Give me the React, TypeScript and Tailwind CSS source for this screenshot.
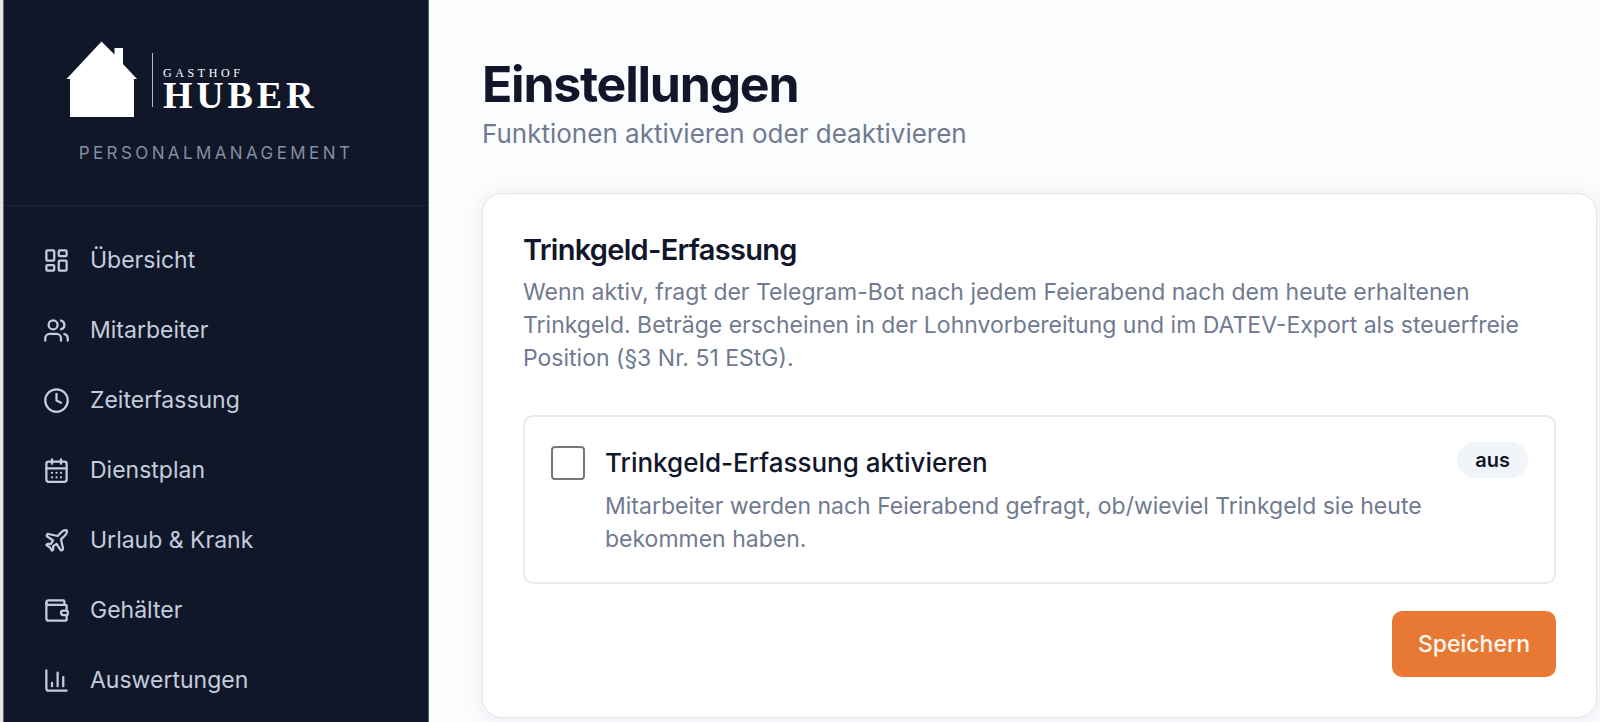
import { useState } from 'react';
import {
  CalendarDays,
  ChartColumn,
  Clock,
  LayoutDashboard,
  Plane,
  Users,
  Wallet,
  type LucideIcon,
} from 'lucide-react';

interface NavItem {
  label: string;
  href: string;
  icon: LucideIcon;
}

const navItems: NavItem[] = [
  { label: 'Übersicht', href: '#uebersicht', icon: LayoutDashboard },
  { label: 'Mitarbeiter', href: '#mitarbeiter', icon: Users },
  { label: 'Zeiterfassung', href: '#zeiterfassung', icon: Clock },
  { label: 'Dienstplan', href: '#dienstplan', icon: CalendarDays },
  { label: 'Urlaub & Krank', href: '#urlaub', icon: Plane },
  { label: 'Gehälter', href: '#gehaelter', icon: Wallet },
  { label: 'Auswertungen', href: '#auswertungen', icon: ChartColumn },
];

const Logo = () => (
  <div className="flex items-start">
    <svg className="w-[72px] h-[78px]" viewBox="0 0 72 78" fill="#fff" aria-hidden="true">
      <path d="M35.5 .5L48.5 13.5V7H57V23L71 38H68V76H4V38H.5Z" />
    </svg>
    <div className="ml-[14px] mt-3 h-[54px] w-px bg-white/70" />
    <div className="ml-[10px] mt-6 font-['Liberation_Serif',serif] text-white">
      <div className="text-[12px] leading-4 tracking-[0.3em]">GASTHOF</div>
      <div className="text-[38px] leading-7 font-bold tracking-widest">HUBER</div>
    </div>
  </div>
);

const Sidebar = () => (
  <aside className="w-[426px] shrink-0 bg-[#101729] border-l border-r border-[#5b606d]">
    <div className="border-b border-[#1e2638] px-[62px] pt-[41px] pb-10">
      <Logo />
      <p className="mt-[22px] text-center text-[17px] leading-6 tracking-[0.2em] text-[#868da0]">
        PERSONALMANAGEMENT
      </p>
    </div>
    <nav className="flex flex-col px-5 pt-[19px]">
      {navItems.map(({ label, href, icon: Icon }) => (
        <a
          key={label}
          href={href}
          className="flex h-[70px] items-center gap-5 rounded-lg px-[19px] text-[23px] text-[#c5cddc] hover:bg-white/5"
        >
          <Icon size={27} strokeWidth={2} />
          <span>{label}</span>
        </a>
      ))}
    </nav>
  </aside>
);

const TipSettings = () => {
  const [enabled, setEnabled] = useState(false);

  return (
    <section className="rounded-[20px] border border-[#e2e4ee] bg-white px-10 pt-[38px] pb-10 shadow-[0_2px_20px_rgba(15,23,42,0.07)]">
      <h2 className="text-[29px] leading-9 font-semibold tracking-tight text-[#11162a]">
        Trinkgeld-Erfassung
      </h2>
      <p className="mt-2 text-[23px] leading-[33px] text-[#717a90]">
        Wenn aktiv, fragt der Telegram-Bot nach jedem Feierabend nach dem heute erhaltenen
        Trinkgeld. Beträge erscheinen in der Lohnvorbereitung und im DATEV-Export als steuerfreie
        Position (§3 Nr. 51 EStG).
      </p>

      <div className="mt-10 flex items-start gap-5 rounded-[10px] border-2 border-[#e9eaed] px-[26px] pt-[25px] pb-[26px]">
        <input
          id="tip-tracking"
          type="checkbox"
          checked={enabled}
          onChange={(e) => setEnabled(e.target.checked)}
          className="mt-1 size-[34px] shrink-0 appearance-none rounded-[4px] border-2 border-[#777] bg-white checked:bg-[#e87935]"
        />
        <label htmlFor="tip-tracking" className="flex-1">
          <span className="block text-[26px] leading-[42px] font-medium text-[#11162a]">
            Trinkgeld-Erfassung aktivieren
          </span>
          <span className="mt-1.5 block text-[23px] leading-[33px] text-[#717a90]">
            Mitarbeiter werden nach Feierabend gefragt, ob/wieviel Trinkgeld sie heute bekommen
            haben.
          </span>
        </label>
        <span className="rounded-full bg-[#f1f5f9] px-[18px] py-1 text-[20px] leading-7 font-semibold text-[#11162a]">
          {enabled ? 'an' : 'aus'}
        </span>
      </div>

      <div className="mt-[27px] flex justify-end">
        <button
          type="button"
          className="h-[66px] rounded-[10px] bg-[#e87935] px-[26px] text-[23px] font-medium text-[#fff7f0]"
        >
          Speichern
        </button>
      </div>
    </section>
  );
};

const App = () => {
  return (
    <div className="flex min-h-screen bg-[#fafcfe] font-[Inter,sans-serif] border-l-3 border-[#e6e5df]">
      <Sidebar />
      <main className="flex-1 pt-[54px] pr-[3px] pb-1 pl-[53px]">
        <header className="mb-[43px]">
          <h1 className="text-[50px] leading-[60px] font-bold tracking-tight text-[#11162a]">
            Einstellungen
          </h1>
          <p className="mt-1 text-[26px] leading-8 text-[#717a90]">
            Funktionen aktivieren oder deaktivieren
          </p>
        </header>
        <TipSettings />
      </main>
    </div>
  );
};

export default App;
